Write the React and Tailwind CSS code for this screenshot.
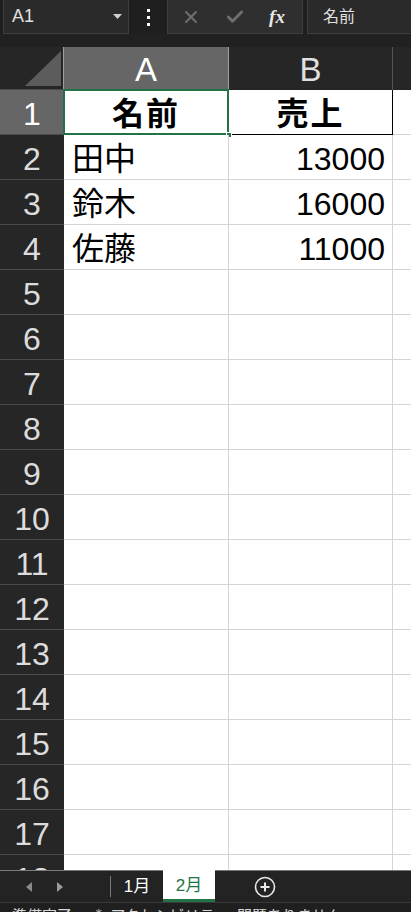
import { X, Check } from 'lucide-react';

const ROWS = [
    { n: 1, a: '名前', b: '売上', head: true },
    { n: 2, a: '田中', b: '13000' },
    { n: 3, a: '鈴木', b: '16000' },
    { n: 4, a: '佐藤', b: '11000' },
];

const JP = { fontFamily: '"Liberation Sans", "Noto Sans CJK JP", sans-serif' };

function Row({ n, a, b, head }) {
    return (
        <div className="flex h-[45px] shrink-0">
            <div
                className={`flex w-[64px] shrink-0 items-center justify-center border-b border-[#4a4a4a] pt-[3px] text-[32px] leading-none ${
                    n === 1 ? 'bg-[#666666] text-white' : 'bg-[#262626] text-[#dcdcdc]'
                }`}
            >
                {n}
            </div>
            <div
                className={`relative flex w-[165px] shrink-0 items-center border-r border-[#d4d4d4] bg-white px-2 pt-[3px] text-[32px] leading-none text-black ${
                    head ? 'justify-center border-b border-b-black font-bold tracking-[2px]' : 'border-b border-b-[#d4d4d4]'
                }`}
            >
                {a}
                {head && (
                    <>
                        <div className="pointer-events-none absolute -top-px -bottom-px -left-px -right-px border-2 border-[#217346]" />
                        <div className="absolute -right-[4px] -bottom-[4px] h-[6px] w-[6px] border border-white bg-[#217346]" />
                    </>
                )}
            </div>
            <div
                className={`flex w-[164px] shrink-0 items-center bg-white pt-[3px] text-[32px] leading-none text-black ${
                    head
                        ? 'justify-center border-r border-b border-black font-bold tracking-[2px]'
                        : 'justify-end border-r border-b border-[#d4d4d4] pr-[7px]'
                }`}
            >
                {b}
            </div>
            <div className="flex-1 border-b border-[#d4d4d4] bg-white" />
        </div>
    );
}

export default function App() {
    const rows = [];
    for (let i = 1; i <= 18; i++) {
        const data = ROWS.find((r) => r.n === i);
        rows.push(<Row key={i} n={i} {...(data ?? {})} />);
    }

    return (
        <div className="flex h-[912px] w-[411px] flex-col overflow-hidden bg-[#1f1f1f]" style={JP}>
            {/* formula bar */}
            <div className="flex h-[34px] shrink-0 items-stretch">
                <div className="ml-[3px] flex w-[126px] items-center justify-between border border-t-0 border-[#3d3d3d] bg-[#2a2a2a] pl-[8px] pr-[6px]">
                    <span className="text-[18px] text-[#e0e0e0]">A1</span>
                    <svg width="9" height="5" viewBox="0 0 9 5">
                        <path d="M0 0h9L4.5 5z" fill="#d0d0d0" />
                    </svg>
                </div>
                <div className="flex w-[38px] flex-col items-center justify-center gap-[4px]">
                    <span className="h-[3px] w-[3px] bg-white" />
                    <span className="h-[3px] w-[3px] bg-white" />
                    <span className="h-[3px] w-[3px] bg-white" />
                </div>
                <div className="flex w-[136px] items-center border border-t-0 border-[#3d3d3d] bg-[#2f2f2f]">
                    <div className="flex w-[46px] justify-center">
                        <X size={20} color="#6e6e6e" strokeWidth={2.5} />
                    </div>
                    <div className="flex w-[42px] justify-center">
                        <Check size={20} color="#6e6e6e" strokeWidth={3.5} />
                    </div>
                    <div className="flex w-[42px] justify-center">
                        <span
                            className="text-[19px] font-bold italic leading-none text-[#e8e8e8]"
                            style={{ fontFamily: '"Liberation Serif", serif' }}
                        >
                            fx
                        </span>
                    </div>
                </div>
                <div className="ml-[4px] flex flex-1 items-center border border-t-0 border-r-0 border-[#3d3d3d] bg-[#2a2a2a] pl-[15px]">
                    <span className="text-[16px] text-[#e0e0e0]">名前</span>
                </div>
            </div>

            <div className="h-[13px] shrink-0 bg-[#212121]" />

            {/* sheet */}
            <div className="flex flex-1 flex-col overflow-hidden bg-white">
                <div className="flex h-[43px] shrink-0 bg-[#262626]">
                    <div className="relative w-[64px] shrink-0 border-r border-[#a0a0a0] border-b border-b-[#4a4a4a]">
                        <svg className="absolute left-0 top-0" width="63" height="43" viewBox="0 0 63 43">
                            <path d="M25 39H61V4z" fill="#5c5c5c" />
                        </svg>
                    </div>
                    <div className="flex w-[165px] shrink-0 items-center justify-center border-r border-[#a0a0a0] bg-[#666666] pt-[2px] text-[33px] leading-none text-white">
                        A
                    </div>
                    <div className="flex w-[164px] shrink-0 items-center justify-center border-r border-[#555555] pt-[2px] text-[33px] leading-none text-[#e0e0e0]">
                        B
                    </div>
                    <div className="flex-1" />
                </div>
                {rows}
            </div>

            {/* sheet tabs */}
            <div className="flex h-[32px] shrink-0 items-stretch border-t border-[#7a7a7a] bg-[#232323]">
                <div className="flex w-[110px] items-center">
                    <svg className="ml-[26px]" width="6" height="10" viewBox="0 0 6 10">
                        <path d="M6 0v10L0 5z" fill="#8a8a8a" />
                    </svg>
                    <svg className="ml-[25px]" width="6" height="10" viewBox="0 0 6 10">
                        <path d="M0 0v10l6-5z" fill="#9a9a9a" />
                    </svg>
                </div>
                <div className="my-[5px] w-px bg-[#7a7a7a]" />
                <div className="flex w-[52px] items-center justify-center text-[17px] text-white">1月</div>
                <div className="-mt-px flex w-[52px] items-center justify-center border-b-[3px] border-[#217346] bg-white pt-[2px] text-[17px] text-[#217346]">
                    2月
                </div>
                <div className="ml-[39px] flex items-center">
                    <svg width="22" height="22" viewBox="0 0 22 22">
                        <circle cx="11" cy="11" r="9.5" fill="none" stroke="#e8e8e8" strokeWidth="1.6" />
                        <path d="M11 6.5v9M6.5 11h9" stroke="#e8e8e8" strokeWidth="2" />
                    </svg>
                </div>
            </div>

            {/* status bar */}
            <div className="h-[10px] shrink-0 overflow-hidden border-t border-[#3a3a3a] bg-[#1f1f1f]">
                <div className="mt-[5px] whitespace-nowrap pl-[12px] text-[15px] leading-none text-[#d8d8d8]">
                    準備完了　 ⁂ アクセシビリティ: 問題ありません
                </div>
            </div>
        </div>
    );
}
